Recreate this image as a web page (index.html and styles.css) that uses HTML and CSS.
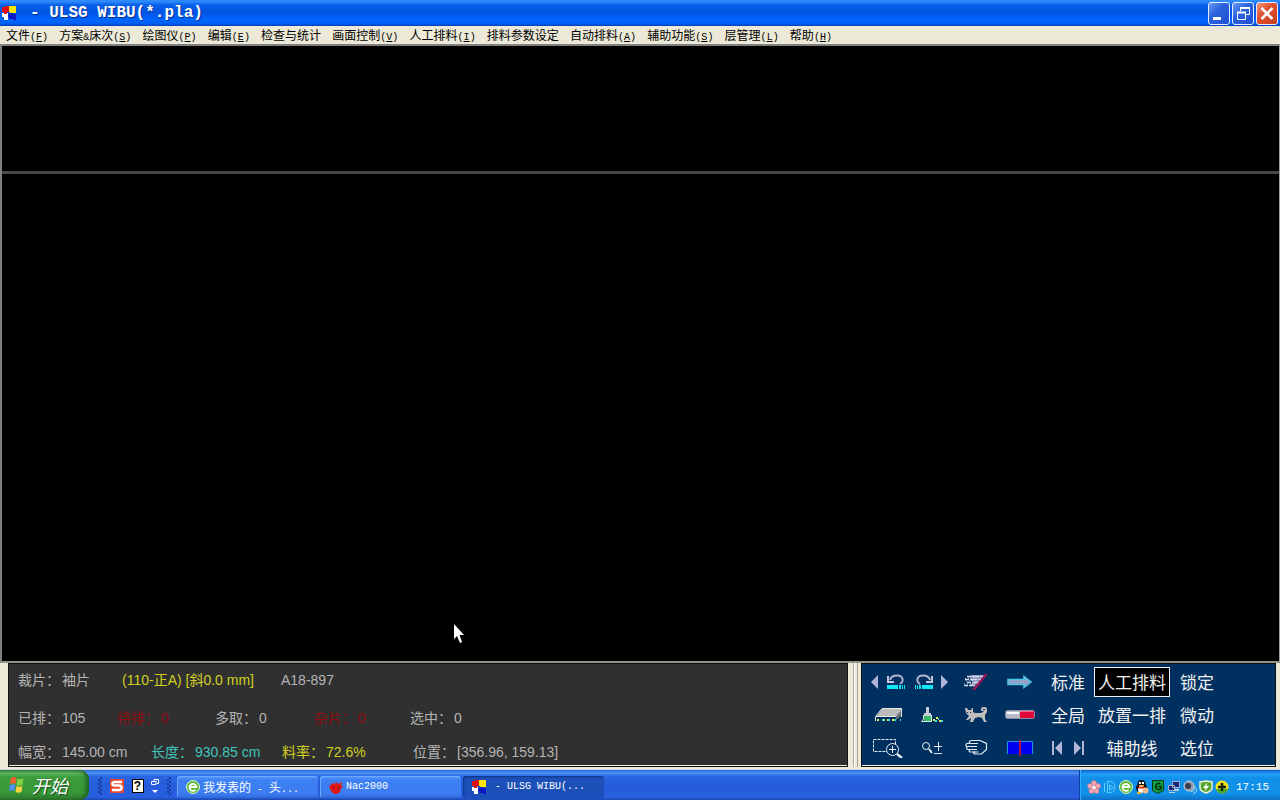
FILE: index.html
```html
<!DOCTYPE html>
<html lang="zh-CN">
<head>
<meta charset="utf-8">
<title>- ULSG WIBU(*.pla)</title>
<link rel="stylesheet" href="styles.css">
</head>
<body>
<svg class="defs" aria-hidden="true">
  <defs>
    <symbol id="app" viewBox="0 0 16 16">
      <path fill="#fff" d="M1 8h6v7H3v-3H1z"/>
      <path fill="#e01010" d="M1 2h3V1h4v6H6v2H3V7H1z"/>
      <path fill="#ffe600" d="M8 1h7v7h-3v1H9V7H8z"/>
      <path fill="#0c18c8" d="M7 9h2V8h3v1h3v6h-3v-1H8v-2H7z"/>
    </symbol>
    <symbol id="globe" viewBox="0 0 14 14">
      <circle cx="7" cy="7" r="6.5" fill="#5dbb3c" stroke="#d8f5c8"/>
      <path d="M3.5 7h7A3.5 3.5 0 1 0 9.6 9.8" fill="none" stroke="#fff" stroke-width="1.8"/>
    </symbol>
  </defs>
</svg>

<header class="titlebar">
  <svg class="app-icon" aria-hidden="true"><use href="#app"/></svg>
  <h1>- ULSG WIBU(*.pla)</h1>
  <div class="window-buttons">
    <button type="button" aria-label="最小化"><svg viewBox="0 0 20 21"><path fill="#fff" d="M4 14h8v3H4z"/></svg></button>
    <button type="button" aria-label="还原"><svg viewBox="0 0 20 21" fill="none" stroke="#fff"><path d="M7.500 8V4.500h9v7H13"/><path stroke-width="2" d="M7 5h10M4 9.500h9"/><path d="M4.500 9v7.500h8V9"/></svg></button>
    <button type="button" class="close" aria-label="关闭"><svg viewBox="0 0 20 21"><path d="M4.500 5l11 11M15.500 5l-11 11" stroke="#fff" stroke-width="2.600"/></svg></button>
  </div>
</header>

<nav class="menubar">
  <button type="button">文件<kbd>(<u>F</u>)</kbd></button>
  <button type="button">方案<kbd>&amp;</kbd>床次<kbd>(<u>S</u>)</kbd></button>
  <button type="button">绘图仪<kbd>(<u>P</u>)</kbd></button>
  <button type="button">编辑<kbd>(<u>E</u>)</kbd></button>
  <button type="button">检查与统计</button>
  <button type="button">画面控制<kbd>(<u>V</u>)</kbd></button>
  <button type="button">人工排料<kbd>(<u>I</u>)</kbd></button>
  <button type="button">排料参数设定</button>
  <button type="button">自动排料<kbd>(<u>A</u>)</kbd></button>
  <button type="button">辅助功能<kbd>(<u>S</u>)</kbd></button>
  <button type="button">层管理<kbd>(<u>L</u>)</kbd></button>
  <button type="button">帮助<kbd>(<u>H</u>)</kbd></button>
</nav>

<main class="workspace">
  <section class="pieces"></section>
  <section class="marker"></section>
  <svg class="pointer" viewBox="0 0 12 20" aria-hidden="true"><path fill="#fff" d="M1 0v15l3-3 3 7 2-1-2.500-7H11z"/></svg>
</main>

<footer class="dock">
  <section class="status">
    <div class="row piece">
      <span class="pair"><span>裁片：</span><span>袖片</span></span>
      <span class="yellow">(110-正A) [斜0.0 mm]</span>
      <span>A18-897</span>
    </div>
    <div class="row counts">
      <span class="pair"><span>已排：</span><span>105</span></span>
      <span class="pair red"><span>待排：</span><span>0</span></span>
      <span class="pair"><span>多取：</span><span>0</span></span>
      <span class="pair red"><span>杂片：</span><span>0</span></span>
      <span class="pair"><span>选中：</span><span>0</span></span>
    </div>
    <div class="row sizes">
      <span class="pair"><span>幅宽：</span><span>145.00 cm</span></span>
      <span class="pair cyan"><span>长度：</span><span>930.85 cm</span></span>
      <span class="pair yellow"><span>料率：</span><span>72.6%</span></span>
      <span class="pair"><span>位置：</span><span>[356.96, 159.13]</span></span>
    </div>
  </section>
  <div class="splitter"></div>
  <section class="tools">
    <div class="cell">
      <button type="button" aria-label="上一步"><svg width="8" height="14" viewBox="0 0 8 14"><path fill="#b4b4d8" d="M7 0v14L0 7z"/></svg></button>
      <button type="button" aria-label="撤消"><svg width="19" height="16" viewBox="0 0 19 16"><path fill="none" stroke="#b4b4d0" stroke-width="2" d="M4 6C5 2.500 8 1.500 11 1.500c6 0 7.500 5.500 3 8.500"/><path fill="#c4c4dc" d="M1 2v7h7V7H3V2z"/><path fill="#10e8f4" d="M1 11h11v4H1zM13 11h2v4h-2zM16 11h1v4h-1zM18 11h1v4h-1z"/></svg></button>
    </div>
    <div class="cell">
      <button type="button" aria-label="重做"><svg width="19" height="16" viewBox="0 0 19 16"><path fill="none" stroke="#b4b4d0" stroke-width="2" d="M15 6C14 2.500 11 1.500 8 1.500C2 1.500.500 7 5 10"/><path fill="#c4c4dc" d="M18 2v7h-7V7h5V2z"/><path fill="#10e8f4" d="M7 11h11v4H7zM4 11h2v4H4zM2 11h1v4H2zM0 11h1v4H0z"/></svg></button>
      <button type="button" aria-label="下一步"><svg width="8" height="14" viewBox="0 0 8 14"><path fill="#b4b4d8" d="M0 0v14l7-7z"/></svg></button>
    </div>
    <div class="cell"><button type="button" aria-label="清除"><svg width="26" height="18" viewBox="0 0 26 18"><path fill="#8890c0" d="M8 2h13l-8 10H7l4-4H7l3-3H6z"/><path stroke="#d8dcec" stroke-width="1.300" stroke-dasharray="4 1 7 1" d="M4 3.500h17M2 6.500h17M4 9.500h12M1 12.500h11"/><path stroke="#b8bcdc" stroke-dasharray="1 2" d="M2 5.500h8M3 8h8M1 11h8"/><path fill="#a01858" d="M22 1h3L12 17h-3z"/></svg></button></div>
    <div class="cell"><button type="button" aria-label="移动"><svg width="26" height="14" viewBox="0 0 26 14"><path fill="#98a0c8" stroke="#48c8e8" stroke-width="1.500" d="M1 4.500h16V1.500l7 5.500-7 5.500V9.500H1z"/></svg></button></div>
    <div class="cell"><button type="button">标准</button></div>
    <div class="cell"><button type="button" class="active" aria-pressed="true">人工排料</button></div>
    <div class="cell"><button type="button">锁定</button></div>

    <div class="cell"><button type="button" aria-label="床次"><svg width="28" height="16" viewBox="0 0 28 16"><path fill="#bcbcbc" d="M8 2h19l-6 8H2z"/><path fill="none" stroke="#e8e8e8" d="M1.500 14V9.500L8 1.500h19.500L22 9.500H2M27.500 2v8"/><path fill="#707478" d="M22 10l5-7v6l-5 4z"/><path stroke="#e8e850" stroke-width="2" stroke-dasharray="2 3 3 2" d="M3 13h18"/><path stroke="#40e0d0" stroke-width="2" stroke-dasharray="2 4" d="M8 13h19"/></svg></button></div>
    <div class="cell"><button type="button" aria-label="清扫"><svg width="22" height="16" viewBox="0 0 22 16"><path fill="#c8ccd8" d="M5 0h3v6h2v3H3V6h2z"/><path fill="#38b868" d="M3 9h7v5H3z"/><path fill="none" stroke="#dceee0" d="M2.500 8v4L.500 14.500h10V8"/><path fill="#e8e850" d="M12 12h2v2h-2zM15 10h2v2h-2zM18 13h2v2h-2z"/><path fill="#40e0d0" d="M14 13h2v2h-2zM17 11h1v2h-1zM20 13h2v2h-2z"/></svg></button></div>
    <div class="cell"><button type="button" aria-label="自动"><svg width="24" height="18" viewBox="0 0 24 18"><path fill="#c0bebc" d="M1 2h2l1 2h3l1-2h1v4l2 1h6l2-1 1-1h-3V2l2-1h3l1 2v3l-2 3v4l2 3h-3l-2-4-3-1-4 1-2 4H6l1-4-3 2H2l3-4-3-3z"/><path stroke="#003060" d="M3 6.500h1M6 6.500h1M19 3.500h2"/></svg></button></div>
    <div class="cell"><button type="button" aria-label="对花"><svg width="30" height="9" viewBox="0 0 30 9"><rect x=".5" y=".5" width="29" height="8" rx="2" fill="#b8bcc8" stroke="#8890a8"/><path fill="#fff" d="M2 2h12v2H2z"/><path fill="#e00838" d="M15 1h14v7H15z"/><path fill="#ff6080" d="M15 1h13v1H15z"/></svg></button></div>
    <div class="cell"><button type="button">全局</button></div>
    <div class="cell"><button type="button">放置一排</button></div>
    <div class="cell"><button type="button">微动</button></div>

    <div class="cell"><button type="button" aria-label="框选放大"><svg width="32" height="20" viewBox="0 0 32 20" fill="none" stroke="#e4ecf4"><path stroke-dasharray="3 1" d="M1.500 1.500h22v12h-22z"/><circle cx="20.500" cy="11.500" r="6" fill="#003060"/><path d="M17 11.500h7M20.500 8v7"/><path stroke-width="2.500" d="M25 16l5 4"/></svg></button></div>
    <div class="cell"><button type="button" aria-label="缩放"><svg width="22" height="14" viewBox="0 0 22 14" fill="none" stroke="#e4ecf4"><circle cx="5" cy="5" r="3.500"/><path stroke-width="2" d="M8 8l3 4"/><path d="M13 5.500h8M17.500 1v9M13 12.500h8"/></svg></button></div>
    <div class="cell"><button type="button" aria-label="抓手"><svg width="23" height="17" viewBox="0 0 23 17" fill="none" stroke="#e4ecf4" stroke-width="1.200"><path d="M13 4.500H5C3.500 3 4.500 1.500 7 1.500h8l6.500 3v6l-5 4.500h-7c-1.500-1-1-2 0-2h4"/><path d="M12 4.500H2C.500 5 .500 7 2 7.500h10M3 7.500C1 8 1 10 3 10.500h9M5 10.500c-1.500.500-1 2.500.500 2.500h5"/></svg></button></div>
    <div class="cell"><button type="button" aria-label="分割"><svg width="26" height="16" viewBox="0 0 26 16"><path fill="#0000f0" d="M1 2h11v12H1zM14 2h11v12H14z"/><path fill="none" stroke="#2090e8" d="M.500 14V1.500H12M14 1.500h11.500V14"/><path fill="#b01840" d="M12 0h2v16h-2z"/></svg></button></div>
    <div class="cell steps">
      <button type="button" aria-label="第一个"><svg width="11" height="14" viewBox="0 0 11 14"><path fill="#b4b4d8" d="M0 0h2v14H0zM10 0v14L3 7z"/></svg></button>
      <button type="button" aria-label="最后一个"><svg width="11" height="14" viewBox="0 0 11 14"><path fill="#b4b4d8" d="M9 0h2v14H9zM1 0v14l7-7z"/></svg></button>
    </div>
    <div class="cell"><button type="button">辅助线</button></div>
    <div class="cell"><button type="button">选位</button></div>
  </section>
</footer>

<footer class="taskbar">
  <button type="button" class="start">
    <svg width="18" height="18" viewBox="0 0 18 18" aria-hidden="true"><path fill="#f06030" d="M3 2c2-1.500 4-1 5.500 0L7.500 8C6 7 4 7 2 8z"/><path fill="#80d040" d="M9.500 2.500c2 1 4 1 6 0L14.500 9c-2 1-4 1-6 0z"/><path fill="#5090f0" d="M2 9c2-1 4-1 5.500 0l-1 6c-1.500-1-3.500-1-5.500 0z"/><path fill="#f8d040" d="M8.500 10c2 1 4 1 6 0l-1 6c-2 1-4 1-6 0z"/></svg>
    <span>开始</span>
  </button>
  <div class="quick">
    <span class="grip"></span>
    <button type="button" aria-label="搜狗输入法"><svg width="14" height="14" viewBox="0 0 14 14"><rect width="14" height="14" rx="1" fill="#e84830"/><path d="M12 3H5C1.500 3 1.500 6.500 5 6.500h4c3.500 0 3.500 4.500 0 4.500H2" fill="none" stroke="#fff" stroke-width="2.400"/></svg></button>
    <button type="button" class="help">?</button>
    <button type="button" aria-label="语言栏选项"><svg width="8" height="16" viewBox="0 0 8 16"><path d="M3 3V1.500h4.500v4H6M.500 3.500h4.500v3H.500z" fill="none" stroke="#fff"/><path fill="#fff" d="M1 12h6l-3 3z"/></svg></button>
    <span class="grip"></span>
  </div>
  <div class="tasks">
    <button type="button"><svg width="14" height="14"><use href="#globe"/></svg><span>我发表的<kbd> - </kbd>头<kbd>...</kbd></span></button>
    <button type="button"><svg width="14" height="13" viewBox="0 0 14 13"><path fill="#e01818" d="M3 2l3 1 1-2 2 2 4-2-1 3 2 2-2 1-1 4-3 2H5l-3-3-2-5 2-1z"/><path fill="none" stroke="#a01010" d="M4.500 5v4M9.500 5v4"/></svg><kbd>Nac2000</kbd></button>
    <button type="button" class="current"><svg width="16" height="16"><use href="#app"/></svg><kbd>- ULSG WIBU(...</kbd></button>
  </div>
  <div class="tray">
    <svg viewBox="0 0 14 14"><g fill="#f4a8b0" stroke="#d86878" stroke-width=".500"><circle cx="7" cy="3" r="2.500"/><circle cx="11" cy="6" r="2.500"/><circle cx="9.500" cy="11" r="2.500"/><circle cx="4.500" cy="11" r="2.500"/><circle cx="3" cy="6" r="2.500"/></g><circle cx="7" cy="7.500" r="2" fill="#fff0e8"/></svg>
    <svg viewBox="0 0 14 14" fill="none" stroke="#60d0ff"><path d="M1.500 3v9M4.500 1.500h3c6 0 6 11 0 11h-3z"/><path d="M6.500 5l4 2.500-4 2.500z"/></svg>
    <svg viewBox="0 0 14 14"><use href="#globe"/></svg>
    <svg viewBox="0 0 14 14"><ellipse cx="6.500" cy="8" rx="5.500" ry="5" fill="#101018"/><circle cx="6.500" cy="4" r="4" fill="#101018"/><ellipse cx="6" cy="9.500" rx="3" ry="3.500" fill="#fff"/><path fill="#fff" d="M4 2h2v2H4zM7 2h2v2H7z"/><path fill="#f8b020" d="M4 5h5v1.500H4zM2 12h4v2H2z"/><path fill="#e02020" d="M3 7h7v1.500H3z"/><circle cx="10.500" cy="10.500" r="3" fill="#f0b888"/></svg>
    <svg viewBox="0 0 14 14"><path fill="#10a040" stroke="#083818" d="M1.500.500h11v10L7 13.500l-5.500-3z"/><path d="M9.500 4A3 3 0 1 0 10 8.500V6.500H7" fill="none" stroke="#082810" stroke-width="1.500"/></svg>
    <svg viewBox="0 0 14 14"><path fill="#182878" stroke="#a8b0d0" d="M5.500 1.500h7v6h-7zM1.500 5.500h6v5h-6z"/><path fill="#c0c8e0" d="M7 9h5v2H7zM2 12h6v1H2z"/></svg>
    <svg viewBox="0 0 14 14"><circle cx="6" cy="6" r="5" fill="#9098a8" stroke="#c8ccd4"/><circle cx="5" cy="6" r="3" fill="#384050"/><path d="M8 12c3-1 4-3 4-6M10 14c3-1 4-4 4-6" fill="none" stroke="#c0d8f0"/></svg>
    <svg viewBox="0 0 14 14"><path fill="#58a830" stroke="#f0f0d0" stroke-width="1.500" d="M1 2l6-1 6 1v6c0 2-3 4-6 5-3-1-6-3-6-5z"/><path fill="#fff" d="M8 3L4 8h2.500L6 11l4-5H7.500z"/></svg>
    <svg viewBox="0 0 14 14"><circle cx="7" cy="7" r="6.500" fill="#f0e020"/><path fill="#48a828" d="M1 9c2 6 10 6 12 0z"/><path d="M7 3v8M3 7h8" stroke="#102008" stroke-width="2.500"/></svg>
    <time>17:15</time>
  </div>
</footer>
</body>
</html>
```

FILE: styles.css
```css
* { box-sizing: border-box; }

body {
  margin: 0;
  height: 100vh;
  display: flex;
  flex-direction: column;
  overflow: hidden;
  background: #ece9d8;
  font: 12px/16px "Noto Sans CJK SC", sans-serif;
}

button {
  margin: 0;
  padding: 0;
  border: 0;
  background: none;
  color: inherit;
  font: inherit;
  white-space: nowrap;
}

svg { display: block; flex: none; }
kbd {
  font-family: "Liberation Mono", monospace;
  font-size: 10px;
  line-height: 1;
  white-space: pre;
}
.defs { position: absolute; width: 0; height: 0; }

/* Title bar */
.titlebar {
  flex: none;
  height: 26px;
  display: flex;
  align-items: center;
  padding-right: 2px;
  background: linear-gradient(#2c84f4 0, #3090ff 1px, #0a60e8 5px, #0054e3 12px, #0064fc 20px, #0062f8 23px, #0040c0 26px);
  color: #fff;
}
.app-icon { width: 16px; height: 16px; margin-left: 1px; }
h1 {
  margin: 0 auto 0 13px;
  font: bold 16px/24px "Liberation Mono", monospace;
  text-shadow: 1px 1px #0a3090;
}
.window-buttons { display: flex; gap: 2px; }
.window-buttons button {
  width: 22px;
  height: 23px;
  border: 1px solid #e4ecff;
  border-radius: 3px;
  background: linear-gradient(135deg, #6c9cf4, #2c62dc 40%, #2050d0);
}
.window-buttons .close { background: linear-gradient(135deg, #f09878, #e05030 40%, #c83c18); }

/* Menu bar */
.menubar {
  flex: none;
  display: flex;
  align-items: center;
  justify-content: space-between;
  width: 65%;
  height: 18px;
  padding-left: 6px;
  color: #000;
}
.menubar button { height: 16px; }

/* Marker area */
.workspace {
  flex: 1;
  position: relative;
  display: flex;
  flex-direction: column;
  border: 2px solid #808080;
  border-right: 1px solid #a0a0a0;
  border-bottom-color: #98948c;
  background: #000;
}
.pieces { height: 128px; border-bottom: 3px solid #484848; }
.marker { flex: 1; }
.pointer { position: absolute; left: 451px; top: 578px; width: 12px; height: 20px; }

/* Status and tools */
.dock {
  flex: none;
  display: flex;
  padding: 0 4px 2px 8px;
  border-bottom: 1px solid #c8d4e8;
}
.status, .tools {
  height: 104px;
  border: 1px solid #101010;
  box-shadow: inset 0 -1px #f4f2e8;
}
.status {
  flex: 1;
  padding: 0 9px;
  background: #303030;
  color: #b4b4b4;
  font: 14px/20px "Liberation Sans", "Noto Sans CJK SC", sans-serif;
}
.row { display: grid; white-space: nowrap; }
.piece { grid-template-columns: 104px 159px 1fr; padding-top: 6px; }
.counts { grid-template-columns: 99px 98px 99px 96px 1fr; padding-top: 18px; }
.sizes { grid-template-columns: 133px 131px 131px 1fr; padding-top: 14px; }
.pair { display: flex; gap: 2px; }
.yellow { color: #d0d020; }
.cyan { color: #40c4bc; }
.red { color: #900c10; }

.splitter {
  width: 13px;
  border-right: 3px solid #ece9d8;
  background: linear-gradient(90deg, #ece9d8 5px, #aca899 5px, #aca899 6px, #fff 6px, #fff 7px, #ece9d8 7px, #ece9d8 9px, #aca899 9px);
}

.tools {
  width: 415px;
  padding: 1px 4px;
  display: grid;
  grid-template-columns: 44px 44px 44px 44px 52px 76px 54px;
  grid-template-rows: repeat(3, 33px);
  background: #003060;
  color: #f0f0f0;
  font-size: 17px;
  line-height: 28px;
}
.cell { display: flex; align-items: center; justify-content: center; gap: 7px; }
.steps { gap: 10px; }
.active {
  width: 76px;
  height: 30px;
  border: 1px solid #f0f0f0;
  background: #000;
}

/* Taskbar */
.taskbar {
  flex: none;
  display: flex;
  height: 30px;
  background: linear-gradient(#2c64d8, #4c94f4 3px, #2c66e0 6px, #245cdc 16px, #2860e0 27px, #1c48b0);
  color: #fff;
}
.start {
  width: 89px;
  display: flex;
  align-items: center;
  gap: 6px;
  padding-left: 8px;
  border-radius: 0 9px 9px 0;
  background: linear-gradient(#3c8c3c, #64b864 3px, #3c9c3c 7px, #389838 22px, #2c7c2c);
  box-shadow: inset -3px 0 4px #206020;
  font-size: 18px;
  font-style: italic;
  text-shadow: 1px 1px 1px #184818;
}
.quick {
  width: 88px;
  display: flex;
  align-items: center;
  justify-content: space-between;
  padding: 2px 6px 0 9px;
}
.grip {
  width: 4px;
  height: 18px;
  background: repeating-conic-gradient(#153c9c 0 25%, transparent 0 50%) 0 0 / 4px 4px;
}
.help {
  width: 12px;
  height: 14px;
  border: 1px solid #000;
  background: #fffff0;
  color: #000;
  font: bold 12px/12px "Liberation Sans", sans-serif;
}
.tasks { flex: 1; display: flex; gap: 2px; padding-top: 6px; }
.tasks button {
  flex: 0 1 141px;
  height: 22px;
  display: flex;
  align-items: center;
  gap: 3px;
  padding-left: 9px;
  border-radius: 3px;
  background: linear-gradient(#5c9cfc, #3c80f4 4px, #3c7cf0 18px, #2c68d8);
  box-shadow: inset 1px 1px #6ca8fc;
}
.tasks .current {
  gap: 8px;
  padding-left: 8px;
  background: #1c50b8;
  box-shadow: inset 1px 1px 2px #103480;
}
.tray {
  width: 201px;
  display: flex;
  align-items: center;
  gap: 2px;
  padding: 3px 0 0 7px;
  border-left: 1px solid #1040a0;
  background: linear-gradient(#1060c8, #20a0f8 4px, #1090e8 8px, #1090e8 24px, #1070c8);
  box-shadow: inset 1px 0 #30b0ff;
}
.tray svg { width: 14px; height: 14px; }
time { margin-left: 5px; font: 11px/16px "Liberation Mono", monospace; }
```
